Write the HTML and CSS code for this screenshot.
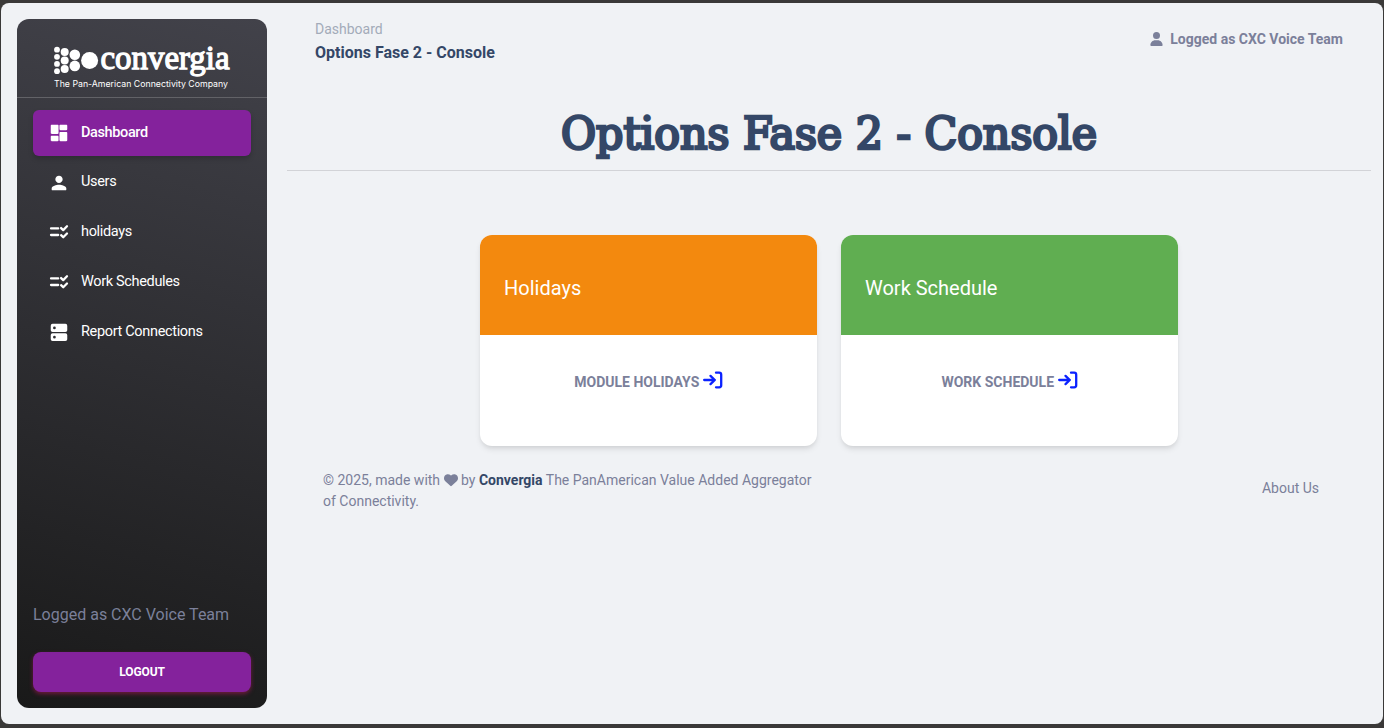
FILE: index.html
```html
<!DOCTYPE html>
<html lang="en">
<head>
<meta charset="utf-8">
<title>Options Fase 2 - Console</title>
<link rel="stylesheet" href="styles.css">
</head>
<body>
<svg class="defs" width="0" height="0" aria-hidden="true">
  <symbol id="dashboard" viewBox="0 0 24 24"><path d="M4 13h6.500c.55 0 1-.45 1-1V4c0-.55-.45-1-1-1H4c-.55 0-1 .45-1 1v8c0 .55.45 1 1 1zm0 8h6.500c.55 0 1-.45 1-1v-4c0-.55-.45-1-1-1H4c-.55 0-1 .45-1 1v4c0 .55.45 1 1 1zm9.500 0H20c.55 0 1-.45 1-1v-8c0-.55-.45-1-1-1h-6.500c-.55 0-1 .45-1 1v8c0 .55.45 1 1 1zM12.500 4v4c0 .55.45 1 1 1H20c.55 0 1-.45 1-1V4c0-.55-.45-1-1-1h-6.500c-.55 0-1 .45-1 1z"/></symbol>
  <symbol id="person" viewBox="0 0 24 24"><path d="M12 12c2.210 0 4-1.790 4-4s-1.790-4-4-4-4 1.790-4 4 1.790 4 4 4zm0 2c-2.670 0-8 1.340-8 4v1c0 .55.45 1 1 1h14c.55 0 1-.45 1-1v-1c0-2.660-5.330-4-8-4z"/></symbol>
  <symbol id="rule" viewBox="0 0 24 24"><path d="M3.300 7h7.800M3.300 14.200h7.800M14.300 6.600l2.300 2.200L20.700 4.700M14.300 14.400l2.300 2.200L20.700 12.500" fill="none" stroke="currentColor" stroke-width="2.500" stroke-linecap="round" stroke-linejoin="round"/></symbol>
  <symbol id="dns" viewBox="0 0 24 24"><path fill-rule="evenodd" d="M5 2h14a2 2 0 0 1 2 2v5a2 2 0 0 1-2 2H5a2 2 0 0 1-2-2V4a2 2 0 0 1 2-2zm2 3a1.500 1.500 0 1 0 0 3 1.500 1.500 0 0 0 0-3zM5 12.300h14a2 2 0 0 1 2 2v4.400a2 2 0 0 1-2 2H5a2 2 0 0 1-2-2v-4.400a2 2 0 0 1 2-2zm2 2.700a1.500 1.500 0 1 0 0 3 1.500 1.500 0 0 0 0-3z"/></symbol>
  <symbol id="user" viewBox="0 0 448 512"><path d="M224 256a128 128 0 1 0 0-256 128 128 0 1 0 0 256zm-45.700 48C79.800 304 0 383.800 0 482.300 0 498.700 13.300 512 29.700 512h388.600c16.400 0 29.700-13.300 29.700-29.700 0-98.500-79.800-178.300-178.300-178.300h-91.400z"/></symbol>
  <symbol id="enter" viewBox="0 0 21 18"><path d="M1.200 9h10.600M7.500 4.900L11.800 9l-4.300 4.100M13 1.700h3.200a2 2 0 0 1 2 2v10.600a2 2 0 0 1-2 2H13" fill="none" stroke="currentColor" stroke-width="2.300" stroke-linecap="round" stroke-linejoin="round"/></symbol>
  <symbol id="heart" viewBox="0 0 512 512"><path d="M47.600 300.400l180.700 168.700c7.500 7 17.400 10.900 27.700 10.900s20.200-3.900 27.700-10.900l180.700-168.700c30.400-28.300 47.600-68 47.600-109.500v-5.800c0-69.900-50.500-129.500-119.400-141C347 36.500 300.600 51.400 268 84l-12 12-12-12c-32.600-32.600-79-47.500-124.600-39.900C50.500 55.600 0 115.200 0 185.100v5.800c0 41.500 17.200 81.200 47.600 109.500z"/></symbol>
</svg>
<div class="window">
  <aside class="sidebar">
    <div class="brand">
      <svg class="logo" width="178" height="48" viewBox="0 0 178 48">
        <circle cx="4" cy="5.700" r="2.900"/><circle cx="4" cy="12.800" r="2.900"/><circle cx="4" cy="19.900" r="2.900"/><circle cx="4" cy="27.200" r="2.900"/>
        <circle cx="11.700" cy="8" r="4"/><circle cx="11.700" cy="16.500" r="4"/><circle cx="11.700" cy="25" r="4"/>
        <circle cx="21.800" cy="10.700" r="5.300"/><circle cx="21.800" cy="21.900" r="5.300"/>
        <circle cx="36.600" cy="16.400" r="8.500"/>
        <text class="logo-name" x="47.500" y="24.500" textLength="129" lengthAdjust="spacingAndGlyphs">convergia</text>
        <text class="logo-tag" x="1" y="43" textLength="174" lengthAdjust="spacingAndGlyphs">The Pan-American Connectivity Company</text>
      </svg>
    </div>
    <nav class="nav">
      <a class="item active"><svg><use href="#dashboard"/></svg><span>Dashboard</span></a>
      <a class="item"><svg><use href="#person"/></svg><span>Users</span></a>
      <a class="item"><svg><use href="#rule"/></svg><span>holidays</span></a>
      <a class="item"><svg><use href="#rule"/></svg><span>Work Schedules</span></a>
      <a class="item"><svg><use href="#dns"/></svg><span>Report Connections</span></a>
    </nav>
    <div class="account">
      <p class="who">Logged as CXC Voice Team</p>
      <button class="logout">LOGOUT</button>
    </div>
  </aside>
  <main class="main">
    <header class="top">
      <div>
        <div class="crumb">Dashboard</div>
        <div class="page">Options Fase 2 - Console</div>
      </div>
      <div class="user"><svg><use href="#user"/></svg><span>Logged as CXC Voice Team</span></div>
    </header>
    <h1 class="title">
      <svg width="540" height="62"><text x="2" y="44" textLength="536" lengthAdjust="spacingAndGlyphs">Options Fase 2 - Console</text></svg>
    </h1>
    <section class="cards">
      <article class="card">
        <div class="card-head orange">Holidays</div>
        <div class="card-body">MODULE HOLIDAYS <svg><use href="#enter"/></svg></div>
      </article>
      <article class="card">
        <div class="card-head green">Work Schedule</div>
        <div class="card-body">WORK SCHEDULE <svg><use href="#enter"/></svg></div>
      </article>
    </section>
    <footer class="footer">
      <p class="copy">© 2025, made with <svg><use href="#heart"/></svg> by <b>Convergia</b> The PanAmerican Value Added Aggregator of Connectivity.</p>
      <a class="about">About Us</a>
    </footer>
  </main>
</div>
</body>
</html>
```
FILE: styles.css
```css
* { box-sizing: border-box; }
body {
  margin: 0;
  height: 728px;
  padding: 3px 1px 4px;
  overflow: hidden;
  background: #3a3938;
  font-family: Roboto, sans-serif;
  color: #7b809a;
}
.defs { display: none; }
svg { fill: currentColor; flex: none; }
.window {
  display: flex;
  height: 721px;
  padding: 16px 12px 16px 16px;
  border-radius: 8px;
  background: #f0f2f5;
}
.sidebar {
  display: flex;
  flex-direction: column;
  width: 250px;
  border-radius: 12px;
  background: linear-gradient(195deg, #42424a, #191919);
  color: #fff;
}
.brand {
  height: 79px;
  padding: 25px 36px 0;
  border-bottom: 1px solid #626267;
}
.logo { display: block; overflow: visible; }
.logo-name {
  font: 34.500px "Liberation Serif", serif;
  stroke: #fff;
  stroke-width: 1.300px;
}
.logo-tag { font: 400 8.6px Inter, sans-serif; }
.nav {
  display: flex;
  flex-direction: column;
  gap: 4px;
  padding: 12px 16px;
}
.item {
  display: flex;
  align-items: center;
  height: 46px;
  padding-left: 15px;
  gap: 11px;
  border-radius: 6px;
  font-size: 14.500px;
  line-height: 20px;
  letter-spacing: -.34px;
}
.item svg { width: 22px; height: 22px; }
.item span { padding-bottom: 3px; }
.active {
  background: #84229c;
  box-shadow: 0 3px 5px rgba(0, 0, 0, .18);
  font-weight: 500;
  letter-spacing: -.38px;
}
.item.active span { padding-bottom: 1px; }
.account { margin-top: auto; padding: 0 16px 16px; }
.who {
  margin: 0 0 25px;
  font-size: 16px;
  line-height: 24px;
  color: #7b809a;
}
.logout {
  display: block;
  width: 218px;
  height: 40px;
  padding: 0;
  border: 0;
  border-radius: 8px;
  background: #84229c;
  box-shadow: 0 2px 4px rgba(194, 24, 91, .5);
  color: #fff;
  font: bold 12px Roboto, sans-serif;
  letter-spacing: -.1px;
}
.main { flex: 1; margin-left: 20px; }
.top {
  display: flex;
  justify-content: space-between;
  padding: 0 28px;
  height: 82px;
}
.crumb {
  font-size: 14px;
  line-height: 21px;
  color: #a3abb9;
}
.page {
  margin-top: 1px;
  font-size: 16px;
  font-weight: bold;
  line-height: 24px;
  color: #344767;
}
.user {
  display: flex;
  align-items: center;
  height: 40px;
  gap: 7px;
  font-size: 14px;
  font-weight: bold;
}
.user svg { width: 13px; height: 14px; }
.title {
  display: flex;
  justify-content: center;
  height: 70px;
  margin: 0 0 64px;
  padding-top: 4px;
  border-bottom: 1px solid #d2d3d7;
  color: #344767;
  font: 44.500px "DejaVu Serif Condensed", "DejaVu Serif", serif;
}
.title svg {
  overflow: visible;
  stroke: #344767;
  stroke-width: 2.600px;
}
.cards { display: flex; justify-content: center; gap: 24px; }
.card {
  width: 337px;
  height: 211px;
  border-radius: 12px;
  overflow: hidden;
  background: #fff;
  box-shadow: 0 4px 6px -1px rgba(0, 0, 0, .1), 0 2px 4px -1px rgba(0, 0, 0, .06);
}
.card-head {
  height: 100px;
  padding: 38px 24px 0;
  font-size: 20px;
  line-height: 30px;
  color: #fff;
}
.orange { background: #f3890e; }
.green { background: #60ae51; }
.card-body {
  padding: 36px 0 0 1px;
  text-align: center;
  font-size: 14px;
  font-weight: bold;
  line-height: 22px;
}
.card-body svg {
  width: 21px;
  height: 18px;
  color: #0b22ff;
  vertical-align: -2px;
}
.footer {
  display: flex;
  justify-content: space-between;
  padding: 24px 52px 0 36px;
  font-size: 14px;
  line-height: 21px;
}
.copy { width: 494px; margin: 0; }
.copy svg { width: 14px; height: 14px; vertical-align: -2px; }
.copy b { color: #344767; }
.about { padding-top: 8px; }
```
